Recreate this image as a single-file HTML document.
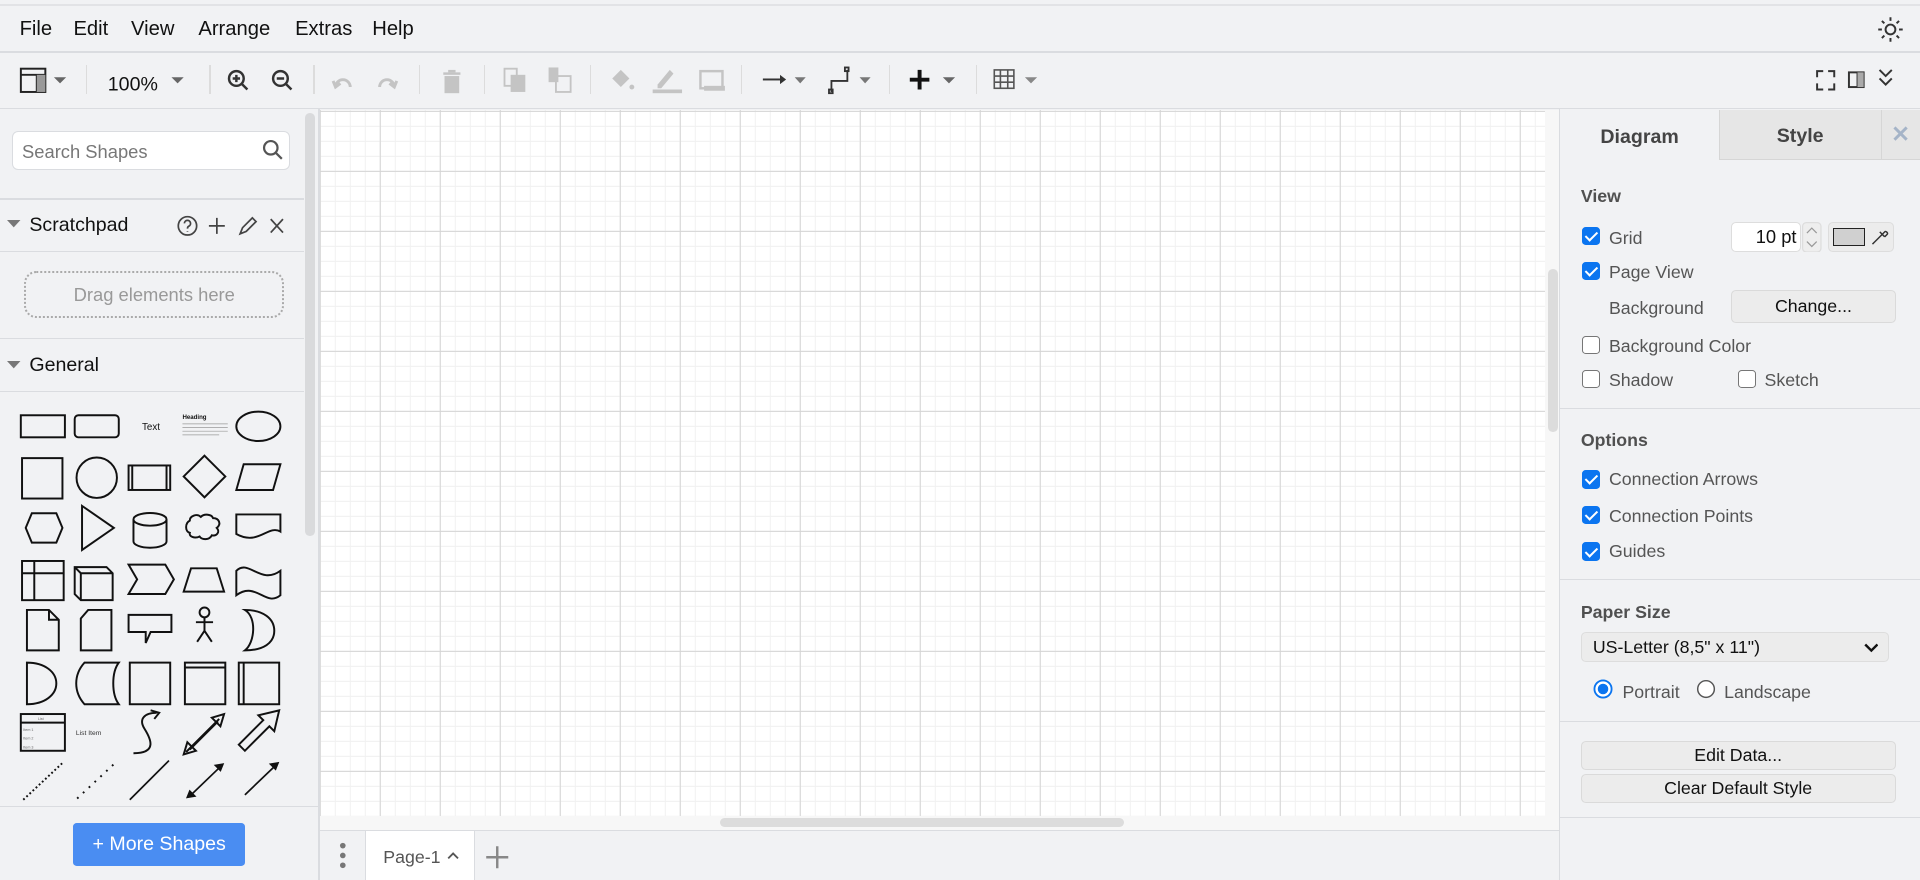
<!DOCTYPE html>
<html><head><meta charset="utf-8"><style>
html{zoom:1.22449}
body{margin:0;width:1568px;height:719px;overflow:hidden;background:#f1f2f4;font-family:"Liberation Sans",sans-serif;position:relative;color:#222}
.a{position:absolute}
.menu span{position:absolute;top:15px;font-size:16.5px;color:#111}
.hl{position:absolute;height:1px;background:#dadce0}
.vl{position:absolute;width:1px;background:#dadce0}
.sep{position:absolute;top:53px;width:1px;height:24px;background:#dcdcdc}
.cb{position:absolute;width:13px;height:13px;border-radius:3px;border:1px solid #767676;background:#fff;box-sizing:border-box;width:15px;height:15px}
.cb.on{background:#0b75f0;border-color:#0b75f0}
.cb.on:after{content:"";position:absolute;left:4px;top:1px;width:4px;height:8px;border:solid #fff;border-width:0 2px 2px 0;transform:rotate(45deg)}
.lbl{position:absolute;font-size:14.5px;color:#555}
.h{position:absolute;font-size:14.5px;font-weight:bold;color:#505050}
.btn{position:absolute;background:#ececec;border:1px solid #dadada;border-radius:4px;box-sizing:border-box;text-align:center;font-size:14.5px;color:#111}
</style></head><body>
<div class="hl" style="top:3px;left:0;width:1568px;background:#e2e3e6;height:2px"></div>
<div class="menu"><span style="left:16px">File</span><span style="left:60px">Edit</span><span style="left:107px">View</span><span style="left:162px">Arrange</span><span style="left:241px">Extras</span><span style="left:304px">Help</span></div>
<svg class="a" style="left:1533px;top:13px" width="22" height="22" viewBox="0 0 22 22" fill="none" stroke="#333" stroke-width="1.6"><circle cx="11" cy="11" r="4"/><path d="M11 1v3M11 18v3M1 11h3M18 11h3M4 4l2 2M16 16l2 2M4 18l2-2M16 6l2-2"/></svg>
<div class="hl" style="top:42px;left:0;width:1568px"></div>
<!-- toolbar -->
<svg class="a" style="left:0;top:44px" width="1568" height="44" viewBox="0 0 1568 44">
<g fill="none" stroke="#222" stroke-width="1.6"><rect x="17" y="12" width="20" height="19"/><path d="M17 17h20M30 17v14"/></g><rect x="30" y="17" width="7" height="14" fill="#999"/>
<path d="M44 19h10l-5 5z" fill="#666"/>
<text x="88" y="30" font-size="16" font-family="Liberation Sans" fill="#111">100%</text>
<path d="M140 19h10l-5 5z" fill="#666"/>
<g fill="none" stroke="#333" stroke-width="2"><circle cx="193" cy="20" r="6"/><path d="M197 24l5 5M190 20h6M193 17v6"/><circle cx="229" cy="20" r="6"/><path d="M233 24l5 5M226 20h6"/></g>
<g fill="none" stroke="#c4c4c4" stroke-width="2.4"><path d="M274 27a6 6 0 0 1 12 0M272 22l2 5 4-3"/><path d="M322 27a6 6 0 0 0-12 0M324 22l-2 5-4-3"/></g>
<g fill="#c4c4c4"><rect x="362" y="15" width="14" height="2"/><rect x="366" y="13" width="6" height="2"/><rect x="363" y="18" width="12" height="14"/>
<rect x="412" y="12" width="10" height="14" fill="none" stroke="#c4c4c4" stroke-width="1.5"/><rect x="417" y="17" width="12" height="14"/>
<rect x="448" y="11" width="8" height="12"/><rect x="454" y="18" width="12" height="13" fill="none" stroke="#c4c4c4" stroke-width="1.5"/>
<path d="M500 20l7-7 7 7-7 7z"/><circle cx="516" cy="27" r="2"/><rect x="533" y="29" width="24" height="3"/><path d="M537 25l10-12 3 3-10 12h-3z"/>
<rect x="572" y="14" width="18" height="14" fill="none" stroke="#c4c4c4" stroke-width="2"/><rect x="575" y="26" width="17" height="4"/></g>
<g fill="#333"><rect x="623" y="20" width="15" height="1.6"/><path d="M637 17l5 3.8-5 3.8z"/></g><path d="M649 19h9l-4.5 5z" fill="#777"/>
<g fill="none" stroke="#333" stroke-width="1.5"><path d="M679 31v-9h13v-9"/><rect x="677" y="29" width="3" height="3"/><rect x="690" y="11" width="3" height="3"/></g><path d="M702 19h9l-4.5 5z" fill="#777"/>
<path d="M751 13v16M743 21h16" stroke="#111" stroke-width="3.2"/><path d="M770 19h10l-5 5z" fill="#666"/>
<g fill="none" stroke="#555" stroke-width="1.3"><rect x="812" y="13" width="16" height="15"/><path d="M812 18h16M812 23h16M817 13v15M823 13v15"/></g><path d="M837 19h10l-5 5z" fill="#888"/>
<g fill="none" stroke="#333" stroke-width="1.6"><path d="M1484 19v-5h5M1493 14h5v5M1498 24v5h-5M1489 29h-5v-5"/><rect x="1510" y="15" width="12" height="12"/><path d="M1517 15v12"/><path d="M1535 13l5 5 5-5M1535 20l5 5 5-5"/></g>
<rect x="1517" y="15" width="5" height="12" fill="#aaa"/>
</svg>
<div class="sep" style="left:70px"></div><div class="sep" style="left:171px"></div><div class="sep" style="left:256px"></div><div class="sep" style="left:342px"></div><div class="sep" style="left:395px"></div><div class="sep" style="left:482px"></div><div class="sep" style="left:605px"></div><div class="sep" style="left:726px"></div><div class="sep" style="left:797px"></div>
<div class="hl" style="top:88px;left:0;width:1568px"></div>
<!-- left sidebar -->
<div class="a" style="left:10px;top:107px;width:227px;height:32px;background:#fff;border:1px solid #dadce0;border-radius:5px;box-sizing:border-box"></div>
<div class="a" style="left:18px;top:115px;font-size:15px;color:#777">Search Shapes</div>
<svg class="a" style="left:213px;top:113px" width="20" height="20" fill="none" stroke="#555" stroke-width="1.8"><circle cx="8" cy="8" r="5.5"/><path d="M12 12l5 5"/></svg>
<div class="hl" style="top:162px;left:0;width:248px"></div>
<svg class="a" style="left:6px;top:180px" width="12" height="8"><path d="M0 0h11l-5.5 6z" fill="#777"/></svg>
<div class="a" style="left:24px;top:175px;font-size:16px;color:#111">Scratchpad</div>
<svg class="a" style="left:142px;top:174px" width="100" height="22" fill="none" stroke="#444" stroke-width="1.4"><circle cx="11" cy="10.5" r="7.5"/><path d="M8.5 8.5a2.5 2.5 0 1 1 3.5 2.3c-1 .5-1 1-1 2M11 15v.5"/><path d="M35 4v13M28.5 10.5h13"/><path d="M54 17l2-5 8-8 3 3-8 8z"/><path d="M79 5l10 11M89 5l-10 11"/></svg>
<div class="hl" style="top:205px;left:0;width:248px"></div>
<div class="a" style="left:20px;top:221px;width:212px;height:39px;border:2px dotted #aaa;border-radius:10px;box-sizing:border-box;text-align:center;line-height:36px;font-size:15px;color:#999">Drag elements here</div>
<div class="hl" style="top:276px;left:0;width:248px"></div>
<svg class="a" style="left:6px;top:295px" width="12" height="8"><path d="M0 0h11l-5.5 6z" fill="#777"/></svg>
<div class="a" style="left:24px;top:289px;font-size:16px;color:#111">General</div>
<div class="hl" style="top:319px;left:0;width:248px"></div>
<svg class="a" style="left:0;top:320px" width="248" height="338" viewBox="0 320 248 338">
<g fill="none" stroke="#111" stroke-width="1.6">
<rect x="17" y="339" width="36" height="18"/><rect x="61" y="339" width="36" height="18" rx="3"/><ellipse cx="211" cy="348" rx="18" ry="12"/>
<rect x="18" y="374" width="33" height="33"/><circle cx="79" cy="390" r="16.5"/><rect x="105" y="380" width="34" height="20"/><path d="M108 380v20M136 380v20"/><path d="M167 372l17 17-17 17-17-17z"/><path d="M199 379h30l-6 21h-30z"/>
<path d="M26 419h20l5 12-5 12H26l-5-12z"/><path d="M67 413l26 18-26 18z"/><path d="M109 424v18a13 5 0 0 0 27 0v-18M109 424a13 5 0 0 0 27 0a13 5 0 0 0-27 0"/><path d="M155 425c0-4 6-6 9-3c3-3 9-2 10 1c5 0 7 5 3 8c3 3 0 7-4 6c-2 4-8 4-10 1c-4 2-9 0-8-3c-4-1-4-8 0-10z"/><path d="M193 420h36v14c-10-6-18 12-36 2z"/>
<rect x="18" y="458" width="34" height="32"/><path d="M18 468h34M28 458v32"/><path d="M61 463h26l5 5v22H66l-5-5zM61 463l5 5h26M66 468v22"/><path d="M105 461h30l7 12-7 12h-30l7-12z"/><path d="M156 464h21l6 19h-33z"/><path d="M193 466c10-10 20 12 36 0v20c-12 10-20-12-36 0z"/>
<path d="M22 498h18l8 8v25H22zM40 498v8h8"/><path d="M72 498h19v33H66v-26z"/><path d="M105 502h35v14h-17l-4 9v-9h-14z"/><circle cx="167" cy="500" r="4"/><path d="M167 504v11M160 508h14M167 515l-6 9M167 515l6 9"/><path d="M200 498c15 0 24 7 24 17s-9 16-24 16c8-6 10-27 0-33z"/>
<path d="M22 541c15 0 24 8 24 17s-9 17-24 17z"/><path d="M69 541h28c-6 8-6 26 0 34H69c-9-10-9-24 0-34z"/><rect x="106" y="541" width="33" height="34"/><rect x="151" y="541" width="33" height="34"/><path d="M151 545h33"/><rect x="195" y="541" width="33" height="34"/><path d="M199 541v34"/>
<rect x="17" y="583" width="36" height="30"/><path d="M17 590h36"/>
<path d="M109 615c20 0 14-12 9-20s0-13 10-13M123 580l7 2-4 5"/>
<path d="M152 614l27-27M150 616l3-10 7 7zM183 583l-10 3 7 7z"/><path d="M155 612l23-23"/>
<path d="M195 608l20-20-4-4 17-4-4 17-4-4-20 20z"/>
</g>
<g fill="none" stroke="#111" stroke-width="1.6" stroke-dasharray="1.5 2"><path d="M19 653l32-30"/></g>
<g fill="none" stroke="#111" stroke-width="1.6" stroke-dasharray="1.5 5"><path d="M63 652l31-29"/></g>
<g fill="none" stroke="#111" stroke-width="1.4"><path d="M106 653l32-32M155 650l25-24M200 649l25-24"/><path d="M153 651l6-1-4-4zM182 624l-6 1 4 4zM227 623l-6 1 4 4z" fill="#111"/></g>
<text x="116" y="351" font-size="8" font-family="Liberation Sans" fill="#111">Text</text>
<text x="149" y="342" font-size="5" font-weight="bold" font-family="Liberation Sans" fill="#111">Heading</text>
<g stroke="#999" stroke-width="0.6"><path d="M149 346h37M149 349h37M149 352h37M149 355h30"/></g>
<text x="62" y="600" font-size="5.5" font-family="Liberation Sans" fill="#333">List Item</text>
<g fill="#666" font-size="3" font-family="Liberation Sans"><text x="31" y="588">List</text><text x="19" y="597">Item 1</text><text x="19" y="604">Item 2</text><text x="19" y="611">Item 3</text></g>
</svg>
<div class="a" style="left:249px;top:92px;width:8px;height:346px;background:#d9dadc;border-radius:4px"></div>
<div class="hl" style="top:658px;left:0;width:260px"></div>
<div class="a" style="left:60px;top:672px;width:140px;height:35px;background:#4a8df2;border-radius:3px;color:#fff;font-size:16px;text-align:center;line-height:35px">+ More Shapes</div>
<div class="vl" style="left:260px;top:89px;height:630px"></div>
<!-- canvas -->
<div class="a" style="left:261px;top:90px;width:1001px;height:576px;background-color:#fff;
background-image:linear-gradient(90deg,#d4d4d4 1px,transparent 1px),linear-gradient(#d4d4d4 1px,transparent 1px),linear-gradient(90deg,#f0f0f0 1px,transparent 1px),linear-gradient(#f0f0f0 1px,transparent 1px);
background-size:49px 49px,49px 49px,12.25px 12.25px,12.25px 12.25px;background-position:48.8px 49.7px,48.8px 49.7px,48.8px 49.7px,48.8px 49.7px"></div>
<div class="a" style="left:261px;top:666px;width:1012px;height:13px;background:#f7f7f7"></div>
<div class="a" style="left:588px;top:668px;width:330px;height:7px;background:#dcdcdc;border-radius:4px"></div>
<div class="a" style="left:1262px;top:90px;width:11px;height:576px;background:#f7f7f7"></div>
<div class="a" style="left:1264px;top:220px;width:8px;height:133px;background:#dcdcdc;border-radius:4px"></div>
<div class="hl" style="top:678px;left:261px;width:1012px"></div>
<svg class="a" style="left:272px;top:688px" width="16" height="24"><circle cx="8" cy="3" r="2.3" fill="#777"/><circle cx="8" cy="11" r="2.3" fill="#777"/><circle cx="8" cy="19" r="2.3" fill="#777"/></svg>
<div class="a" style="left:298px;top:679px;width:88px;height:40px;background:#fff;border-left:1px solid #dadce0;border-right:1px solid #dadce0"></div>
<div class="a" style="left:313px;top:692px;font-size:14.5px;color:#555">Page-1</div>
<svg class="a" style="left:365px;top:695px" width="10" height="8"><path d="M1 6l4-4 4 4" fill="none" stroke="#555" stroke-width="1.5"/></svg>
<svg class="a" style="left:396px;top:690px" width="20" height="20"><path d="M10 1v18M1 10h18" stroke="#888" stroke-width="2"/></svg>
<!-- right panel -->
<div class="vl" style="left:1273px;top:89px;height:630px"></div>
<div class="a" style="left:1404px;top:90px;width:131px;height:40px;background:#e6e6e6;border-left:1px solid #d6d6d6;border-bottom:1px solid #d6d6d6"></div>
<div class="a" style="left:1536px;top:90px;width:32px;height:40px;background:#e6e6e6;border-left:1px solid #d6d6d6;border-bottom:1px solid #d6d6d6"></div>
<div class="a" style="left:1307px;top:103px;font-size:16px;font-weight:bold;color:#444">Diagram</div>
<div class="a" style="left:1451px;top:102px;font-size:16px;font-weight:bold;color:#444">Style</div>
<svg class="a" style="left:1545px;top:102px" width="14" height="14"><path d="M2 2l10 10M12 2L2 12" stroke="#a5b4c8" stroke-width="2.4"/></svg>
<div class="h" style="left:1291px;top:152px">View</div>
<div class="cb on" style="left:1292px;top:185px"></div><div class="lbl" style="left:1314px;top:186px">Grid</div>
<div class="a" style="left:1414px;top:181px;width:57px;height:25px;background:#fff;border:1px solid #ddd;border-radius:4px;box-sizing:border-box;text-align:right;padding-right:3px;font-size:15px;line-height:23px;color:#111">10 pt</div>
<svg class="a" style="left:1472px;top:181px" width="16" height="25"><rect x="0.5" y="0.5" width="15" height="24" rx="3" fill="#eee" stroke="#ddd"/><path d="M4 9l4-4 4 4M4 16l4 4 4-4" fill="none" stroke="#999"/></svg>
<div class="a" style="left:1493px;top:181px;width:54px;height:25px;background:#ececec;border:1px solid #ddd;border-radius:4px;box-sizing:border-box"></div>
<div class="a" style="left:1497px;top:186px;width:26px;height:15px;background:#d0d0d0;border:1px solid #222;box-sizing:border-box"></div>
<svg class="a" style="left:1527px;top:185px" width="16" height="16" fill="none" stroke="#333" stroke-width="1.2"><path d="M2 14l8-8M3 13l-1 1M8 4l4 4M10 6l2-2c1-1 3 1 2 2l-2 2"/></svg>
<div class="cb on" style="left:1292px;top:214px"></div><div class="lbl" style="left:1314px;top:214px">Page View</div>
<div class="lbl" style="left:1314px;top:243px">Background</div>
<div class="btn" style="left:1414px;top:237px;width:134px;height:27px;line-height:25px">Change...</div>
<div class="cb" style="left:1292px;top:274px"></div><div class="lbl" style="left:1314px;top:274px">Background Color</div>
<div class="cb" style="left:1292px;top:302px"></div><div class="lbl" style="left:1314px;top:302px">Shadow</div>
<div class="cb" style="left:1419px;top:302px"></div><div class="lbl" style="left:1441px;top:302px">Sketch</div>
<div class="hl" style="top:333px;left:1274px;width:294px"></div>
<div class="h" style="left:1291px;top:351px">Options</div>
<div class="cb on" style="left:1292px;top:384px"></div><div class="lbl" style="left:1314px;top:383px">Connection Arrows</div>
<div class="cb on" style="left:1292px;top:413px"></div><div class="lbl" style="left:1314px;top:413px">Connection Points</div>
<div class="cb on" style="left:1292px;top:443px"></div><div class="lbl" style="left:1314px;top:442px">Guides</div>
<div class="hl" style="top:473px;left:1274px;width:294px"></div>
<div class="h" style="left:1291px;top:492px">Paper Size</div>
<div class="a" style="left:1291px;top:516px;width:252px;height:25px;background:#ececec;border:1px solid #ddd;border-radius:4px;box-sizing:border-box;font-size:14.5px;line-height:23px;padding-left:9px;color:#111">US-Letter (8,5" x 11")</div>
<svg class="a" style="left:1522px;top:524px" width="12" height="10"><path d="M1 2l5 5 5-5" fill="none" stroke="#111" stroke-width="2"/></svg>
<svg class="a" style="left:1300px;top:554px" width="18" height="18"><circle cx="9" cy="9" r="7" fill="#fff" stroke="#0b75f0" stroke-width="1.5"/><circle cx="9" cy="9" r="4.3" fill="#0b75f0"/></svg>
<div class="lbl" style="left:1325px;top:557px">Portrait</div>
<svg class="a" style="left:1384px;top:554px" width="18" height="18"><circle cx="9" cy="9" r="6.8" fill="#fff" stroke="#555" stroke-width="1.2"/></svg>
<div class="lbl" style="left:1408px;top:557px">Landscape</div>
<div class="hl" style="top:589px;left:1274px;width:294px"></div>
<div class="btn" style="left:1291px;top:605px;width:257px;height:24px;line-height:22px">Edit Data...</div>
<div class="btn" style="left:1291px;top:632px;width:257px;height:24px;line-height:22px">Clear Default Style</div>
<div class="hl" style="top:667px;left:1274px;width:294px"></div>
</body></html>
